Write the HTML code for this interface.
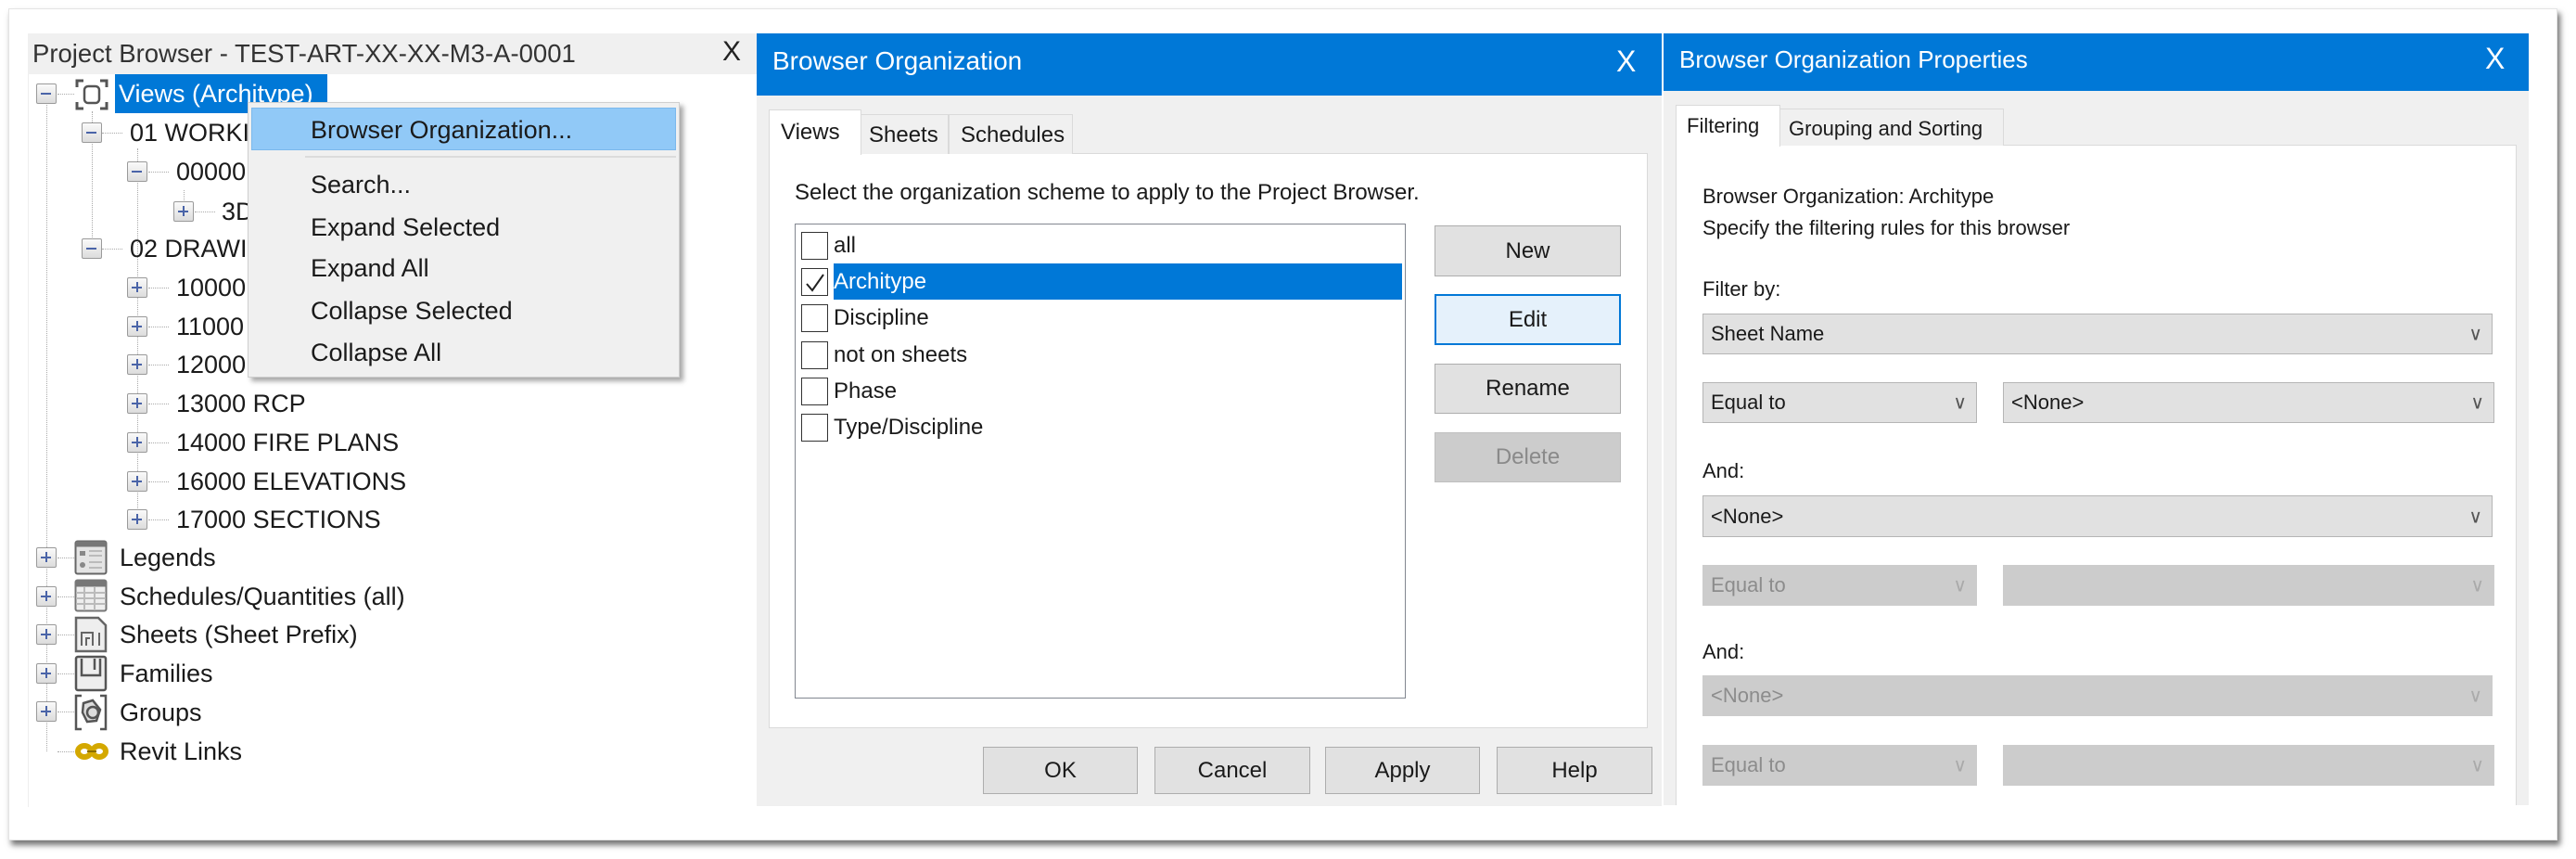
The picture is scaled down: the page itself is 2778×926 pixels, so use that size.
<!DOCTYPE html>
<html><head><meta charset="utf-8">
<style>
*{margin:0;padding:0;box-sizing:border-box}
body{width:2778px;height:926px;background:#fff;position:relative;overflow:hidden;font-family:"Segoe UI","Liberation Sans",sans-serif;color:#1a1a1a}
.a{position:absolute}
.t{position:absolute;white-space:nowrap;line-height:1}
.frame{left:9px;top:9px;width:2749px;height:897px;border:1px solid #e4e4e4;background:#fff;box-shadow:3px 5px 6px rgba(0,0,0,.55)}
.box{position:absolute;width:22px;height:22px;border:1.5px solid #9a9a9a;background:linear-gradient(#fafafa,#dcdcdc);border-radius:2px}
.box:before{content:"";position:absolute;left:4px;top:9px;width:11px;height:2px;background:#4a64a8}
.box.p:after{content:"";position:absolute;left:9px;top:4px;width:2px;height:11px;background:#4a64a8}
.vd{position:absolute;width:0;border-left:1.5px dotted #aaa}
.hd{position:absolute;height:0;border-top:1.5px dotted #aaa}
.tr{font-size:27px}
.btn{position:absolute;background:#e1e1e1;border:1.5px solid #adadad;font-size:24px;display:flex;align-items:center;justify-content:center}
.cb{position:absolute;width:29px;height:30px;border:1.5px solid #333;background:#fff}
.li{position:absolute;font-size:24px;line-height:1}
.cmb{position:absolute;background:#e1e1e1;border:1.5px solid #b5b5b5;font-size:22px;display:flex;align-items:center;padding-left:8px}
.cmb.d{background:#cccccc;border-color:#cccccc;color:#8c8c8c}
.cmb .ch{position:absolute;right:10px;top:50%;transform:translateY(-50%);font-size:20px;color:#555}
.cmb.d .ch{color:#aaa}
</style></head><body>
<div class="a frame"></div>

<div class="a" style="left:30px;top:80px;width:1px;height:790px;background:#eee"></div>
<div class="a" style="left:30px;top:36px;width:786px;height:44px;background:#f0f0f0"></div>
<div class="t" style="left:35px;top:44px;font-size:27.5px;color:#333">Project Browser - TEST-ART-XX-XX-M3-A-0001</div>
<div class="t" style="left:779px;top:41px;font-size:30px;color:#222">X</div>

<div class="vd" style="left:50px;top:113px;height:697px"></div>
<div class="vd" style="left:99px;top:120px;height:148px"></div>
<div class="vd" style="left:148px;top:160px;height:400px"></div>
<div class="vd" style="left:198px;top:205px;height:23px"></div>
<div class="hd" style="left:62px;top:101px;width:18px"></div>
<div class="hd" style="left:62px;top:810px;width:24px"></div>
<div class="hd" style="left:110px;top:143px;width:22px"></div>
<div class="hd" style="left:110px;top:268px;width:22px"></div>
<div class="hd" style="left:160px;top:185px;width:22px"></div>
<div class="hd" style="left:210px;top:228px;width:22px"></div>

<div class="box" style="left:39px;top:90px"></div>
<svg class="a" style="left:80px;top:84px" width="38" height="36" viewBox="0 0 38 36" fill="none" stroke="#555" stroke-width="3"><path d="M3 10V3h7M28 3h7v7M35 26v7h-7M10 33H3v-7"/><rect x="11" y="9" width="16" height="18" rx="4" stroke-width="2.5"/></svg>
<div class="a" style="left:124px;top:80px;width:229px;height:42px;background:#0078d7"></div>
<div class="t tr" style="left:128px;top:88px;color:#fff">Views (Architype)</div>

<div class="box" style="left:88px;top:132px"></div><div class="t tr" style="left:140px;top:130px">01 WORKING</div>
<div class="box" style="left:137px;top:174px"></div><div class="t tr" style="left:190px;top:172px">00000</div>
<div class="box p" style="left:187px;top:217px"></div><div class="t tr" style="left:239px;top:215px">3D</div>
<div class="box" style="left:88px;top:257px"></div><div class="t tr" style="left:140px;top:255px">02 DRAWINGS</div>

<div class="box p" style="left:137px;top:299px"></div><div class="t tr" style="left:190px;top:297px">10000</div><div class="hd" style="left:160px;top:310px;width:22px"></div>
<div class="box p" style="left:137px;top:341px"></div><div class="t tr" style="left:190px;top:339px">11000</div><div class="hd" style="left:160px;top:352px;width:22px"></div>
<div class="box p" style="left:137px;top:382px"></div><div class="t tr" style="left:190px;top:380px">12000</div><div class="hd" style="left:160px;top:393px;width:22px"></div>
<div class="box p" style="left:137px;top:424px"></div><div class="t tr" style="left:190px;top:422px">13000 RCP</div><div class="hd" style="left:160px;top:435px;width:22px"></div>
<div class="box p" style="left:137px;top:466px"></div><div class="t tr" style="left:190px;top:464px">14000 FIRE PLANS</div><div class="hd" style="left:160px;top:477px;width:22px"></div>
<div class="box p" style="left:137px;top:508px"></div><div class="t tr" style="left:190px;top:506px">16000 ELEVATIONS</div><div class="hd" style="left:160px;top:519px;width:22px"></div>
<div class="box p" style="left:137px;top:549px"></div><div class="t tr" style="left:190px;top:547px">17000 SECTIONS</div><div class="hd" style="left:160px;top:560px;width:22px"></div>

<div class="box p" style="left:39px;top:590px"></div><div class="hd" style="left:62px;top:601px;width:18px"></div>
<svg class="a" style="left:80px;top:582px" width="36" height="38" viewBox="0 0 36 38"><rect x="1.5" y="1.5" width="33" height="35" rx="2" fill="#e4e4e4" stroke="#666" stroke-width="2"/><rect x="1.5" y="1.5" width="33" height="6" fill="#777"/><rect x="6" y="12" width="6" height="5" fill="#888"/><circle cx="9" cy="27" r="3" fill="#888"/><path d="M16 12h14M16 17h14M16 24h14M16 30h14" stroke="#bbb" stroke-width="2"/></svg>
<div class="t tr" style="left:129px;top:588px">Legends</div>

<div class="box p" style="left:39px;top:632px"></div><div class="hd" style="left:62px;top:643px;width:18px"></div>
<svg class="a" style="left:80px;top:624px" width="36" height="36" viewBox="0 0 36 36"><rect x="1.5" y="1.5" width="33" height="33" rx="2" fill="#eee" stroke="#777" stroke-width="2"/><rect x="1.5" y="1.5" width="33" height="7" fill="#777"/><path d="M2 15h32M2 21h32M2 27h32M11 9v25M22 9v25" stroke="#bbb" stroke-width="2"/></svg>
<div class="t tr" style="left:129px;top:630px">Schedules/Quantities (all)</div>

<div class="box p" style="left:39px;top:673px"></div><div class="hd" style="left:62px;top:684px;width:18px"></div>
<svg class="a" style="left:80px;top:664px" width="36" height="40" viewBox="0 0 36 40" fill="none" stroke="#666" stroke-width="2.5"><path d="M2 2h24l8 8v28H2z" fill="#eee"/><path d="M8 32V18h12v14M13 32v-8h4" stroke-width="2"/><path d="M27 18v14" stroke-width="2"/></svg>
<div class="t tr" style="left:129px;top:671px">Sheets (Sheet Prefix)</div>

<div class="box p" style="left:39px;top:715px"></div><div class="hd" style="left:62px;top:726px;width:18px"></div>
<svg class="a" style="left:80px;top:706px" width="36" height="40" viewBox="0 0 36 40" fill="none" stroke="#555" stroke-width="2.5"><rect x="2" y="2" width="32" height="36" rx="2" fill="#eee"/><path d="M8 4v18h20V4M22 4v12"/></svg>
<div class="t tr" style="left:129px;top:713px">Families</div>

<div class="box p" style="left:39px;top:756px"></div><div class="hd" style="left:62px;top:767px;width:18px"></div>
<svg class="a" style="left:80px;top:748px" width="36" height="40" viewBox="0 0 36 40" fill="none" stroke="#555" stroke-width="2.5"><path d="M8 2H2v36h6M28 2h6v36h-6"/><path d="M10 10l10-3 8 10-4 12-10 1-5-10z" fill="#ddd"/><circle cx="20" cy="20" r="6"/></svg>
<div class="t tr" style="left:129px;top:755px">Groups</div>

<svg class="a" style="left:80px;top:799px" width="38" height="22" viewBox="0 0 38 22" fill="none" stroke="#d4a800" stroke-width="6"><ellipse cx="11" cy="11" rx="7" ry="6"/><ellipse cx="27" cy="11" rx="7" ry="6"/><path d="M14 11h10" stroke="#8a6d00" stroke-width="2"/></svg>
<div class="t tr" style="left:129px;top:797px">Revit Links</div>

<div class="a" style="left:267px;top:110px;width:466px;height:297px;background:#f0f0f0;border:1.5px solid #cfcfcf;box-shadow:4px 4px 5px rgba(0,0,0,.35)"></div>
<div class="a" style="left:271px;top:116px;width:458px;height:46px;background:#91c9f7;border:1px solid #7bb8ec"></div>
<div class="a" style="left:329px;top:168px;width:400px;height:2px;background:#dcdcdc"></div>
<div class="t tr" style="left:335px;top:127px">Browser Organization...</div>
<div class="t tr" style="left:335px;top:186px">Search...</div>
<div class="t tr" style="left:335px;top:232px">Expand Selected</div>
<div class="t tr" style="left:335px;top:276px">Expand All</div>
<div class="t tr" style="left:335px;top:322px">Collapse Selected</div>
<div class="t tr" style="left:335px;top:367px">Collapse All</div>

<div class="a" style="left:816px;top:36px;width:976px;height:833px;background:#f0f0f0"></div>
<div class="a" style="left:816px;top:36px;width:976px;height:67px;background:#0078d7"></div>
<div class="t" style="left:833px;top:52px;font-size:28px;color:#fff">Browser Organization</div>
<div class="t" style="left:1743px;top:50px;font-size:32px;color:#fff">X</div>
<div class="a" style="left:829px;top:165px;width:948px;height:620px;background:#fff;border:1.5px solid #dadada"></div>
<div class="a" style="left:928px;top:123px;width:95px;height:43px;background:#f0f0f0;border:1.5px solid #dadada;border-bottom:none"></div>
<div class="a" style="left:1023px;top:123px;width:134px;height:43px;background:#f0f0f0;border:1.5px solid #dadada;border-bottom:none"></div>
<div class="a" style="left:829px;top:118px;width:100px;height:49px;background:#fff;border:1.5px solid #dadada;border-bottom:none"></div>
<div class="t" style="left:842px;top:131px;font-size:24px">Views</div>
<div class="t" style="left:937px;top:134px;font-size:24px">Sheets</div>
<div class="t" style="left:1036px;top:134px;font-size:24px">Schedules</div>
<div class="t" style="left:857px;top:196px;font-size:24px">Select the organization scheme to apply to the Project Browser.</div>
<div class="a" style="left:857px;top:241px;width:659px;height:512px;background:#fff;border:1.5px solid #828790"></div>
<div class="a" style="left:899px;top:284px;width:613px;height:39px;background:#0078d7"></div>
<div class="cb" style="left:864px;top:250px"></div><div class="li" style="left:899px;top:253px">all</div>
<div class="cb" style="left:864px;top:289px"></div><div class="li" style="left:899px;top:292px;color:#fff">Architype</div>
<svg class="a" style="left:868px;top:294px" width="22" height="22" viewBox="0 0 22 22"><path d="M2 12l6 7L20 2" fill="none" stroke="#222" stroke-width="2"/></svg>
<div class="cb" style="left:864px;top:328px"></div><div class="li" style="left:899px;top:331px">Discipline</div>
<div class="cb" style="left:864px;top:368px"></div><div class="li" style="left:899px;top:371px">not on sheets</div>
<div class="cb" style="left:864px;top:407px"></div><div class="li" style="left:899px;top:410px">Phase</div>
<div class="cb" style="left:864px;top:446px"></div><div class="li" style="left:899px;top:449px">Type/Discipline</div>
<div class="btn" style="left:1547px;top:243px;width:201px;height:55px">New</div>
<div class="btn" style="left:1547px;top:317px;width:201px;height:55px;background:#e5f1fb;border:2px solid #0078d7">Edit</div>
<div class="btn" style="left:1547px;top:392px;width:201px;height:54px">Rename</div>
<div class="btn" style="left:1547px;top:466px;width:201px;height:54px;background:#cccccc;border-color:#bfbfbf;color:#8a8a8a">Delete</div>
<div class="btn" style="left:1060px;top:805px;width:167px;height:51px">OK</div>
<div class="btn" style="left:1245px;top:805px;width:168px;height:51px">Cancel</div>
<div class="btn" style="left:1429px;top:805px;width:167px;height:51px">Apply</div>
<div class="btn" style="left:1614px;top:805px;width:168px;height:51px">Help</div>

<div class="a" style="left:1794px;top:36px;width:933px;height:832px;background:#f0f0f0"></div>
<div class="a" style="left:1794px;top:36px;width:933px;height:62px;background:#0078d7"></div>
<div class="t" style="left:1811px;top:51px;font-size:26px;color:#fff">Browser Organization Properties</div>
<div class="t" style="left:2680px;top:47px;font-size:32px;color:#fff">X</div>
<div class="a" style="left:1807px;top:156px;width:907px;height:712px;background:#fff;border:1.5px solid #dadada;border-bottom:none"></div>
<div class="a" style="left:1919px;top:117px;width:242px;height:40px;background:#f0f0f0;border:1.5px solid #dadada;border-bottom:none"></div>
<div class="a" style="left:1807px;top:113px;width:113px;height:45px;background:#fff;border:1.5px solid #dadada;border-bottom:none"></div>
<div class="t" style="left:1819px;top:125px;font-size:22px">Filtering</div>
<div class="t" style="left:1929px;top:128px;font-size:22px">Grouping and Sorting</div>
<div class="t" style="left:1836px;top:201px;font-size:22px">Browser Organization: Architype</div>
<div class="t" style="left:1836px;top:235px;font-size:22px">Specify the filtering rules for this browser</div>
<div class="t" style="left:1836px;top:301px;font-size:22px">Filter by:</div>
<div class="cmb" style="left:1836px;top:338px;width:852px;height:44px">Sheet Name<span class="ch">∨</span></div>
<div class="cmb" style="left:1836px;top:412px;width:296px;height:44px">Equal to<span class="ch">∨</span></div>
<div class="cmb" style="left:2160px;top:412px;width:530px;height:44px">&lt;None&gt;<span class="ch">∨</span></div>
<div class="t" style="left:1836px;top:497px;font-size:22px">And:</div>
<div class="cmb" style="left:1836px;top:534px;width:852px;height:45px">&lt;None&gt;<span class="ch">∨</span></div>
<div class="cmb d" style="left:1836px;top:609px;width:296px;height:44px">Equal to<span class="ch">∨</span></div>
<div class="cmb d" style="left:2160px;top:609px;width:530px;height:44px"><span class="ch">∨</span></div>
<div class="t" style="left:1836px;top:692px;font-size:22px">And:</div>
<div class="cmb d" style="left:1836px;top:728px;width:852px;height:44px">&lt;None&gt;<span class="ch">∨</span></div>
<div class="cmb d" style="left:1836px;top:803px;width:296px;height:44px">Equal to<span class="ch">∨</span></div>
<div class="cmb d" style="left:2160px;top:803px;width:530px;height:44px"><span class="ch">∨</span></div>
</body></html>
